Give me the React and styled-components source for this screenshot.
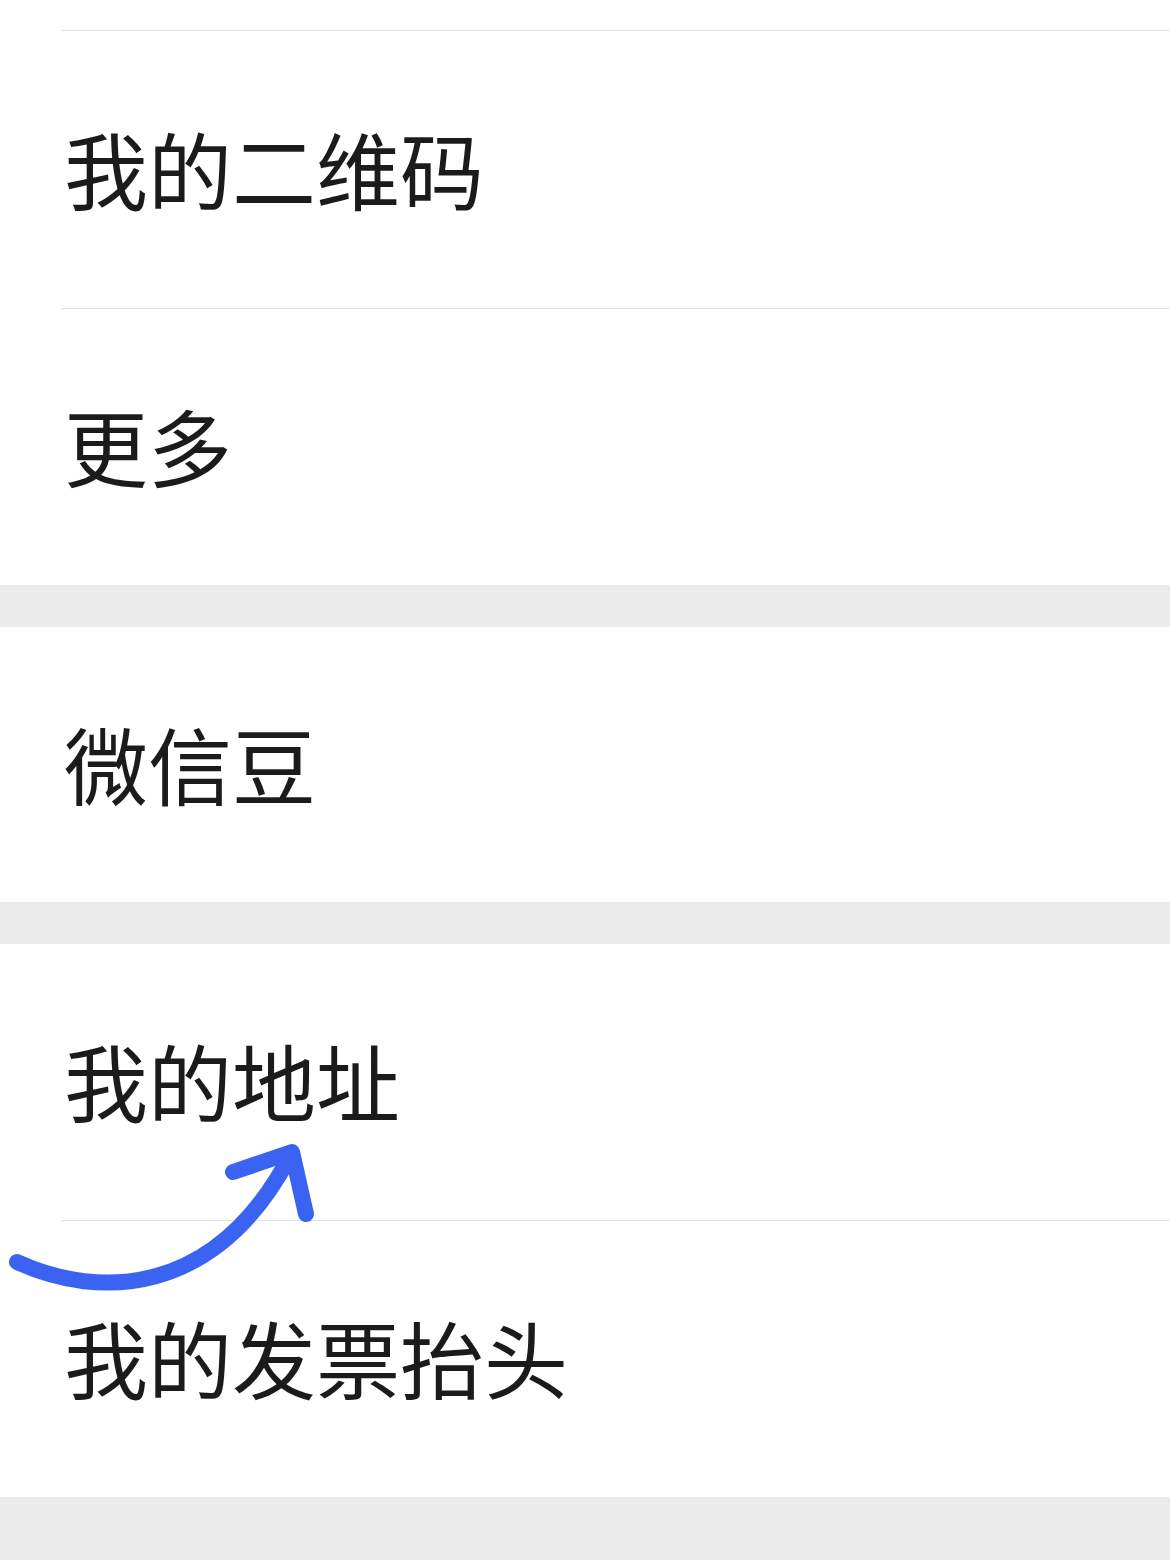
import React from 'react';
import styled, { createGlobalStyle } from 'styled-components';

const GlobalStyle = createGlobalStyle`
  html, body {
    margin: 0;
    padding: 0;
    background: #ebebeb;
  }
  body {
    font-family: "Noto Sans CJK SC", "Noto Sans", sans-serif;
  }
`;

const Page = styled.div`
  width: 1170px;
  min-height: 1560px;
  background: #ebebeb;
  display: flex;
  flex-direction: column;
  gap: 42px;
`;

const Group = styled.div`
  position: relative;
  background: #fff;
  display: flex;
  flex-direction: column;
`;

const Row = styled.div`
  height: ${props => props.h || 276}px;
  display: flex;
  align-items: center;
  padding-left: 64px;
  font-size: 84px;
  line-height: 1;
  color: #1b1b1b;
  padding-bottom: 4px;
  box-sizing: border-box;
`;

const Divider = styled.div`
  height: 1px;
  margin-left: 61px;
  background: #e2e2e2;
`;

const Arrow = styled.svg`
  position: absolute;
  left: 0;
  top: 0;
  width: 340px;
  height: 340px;
  overflow: visible;
  pointer-events: none;
`;

export default function App() {
  return (
    <>
      <GlobalStyle />
      <Page>
        <Group>
          <Row h={30} />
          <Divider />
          <Row h={277}>我的二维码</Row>
          <Divider />
          <Row>更多</Row>
        </Group>
        <Group>
          <Row h={275}>微信豆</Row>
        </Group>
        <Group>
          <Row>我的地址</Row>
          <Divider />
          <Row>我的发票抬头</Row>
          <Arrow viewBox="0 0 340 340">
            <g fill="none" stroke="#3b63f2" strokeWidth="16" strokeLinecap="round" strokeLinejoin="round">
              <path d="M17 318 C 100 356, 215 352, 289 214" />
              <path d="M233 228 L292 208 L306 270" />
            </g>
          </Arrow>
        </Group>
      </Page>
    </>
  );
}
